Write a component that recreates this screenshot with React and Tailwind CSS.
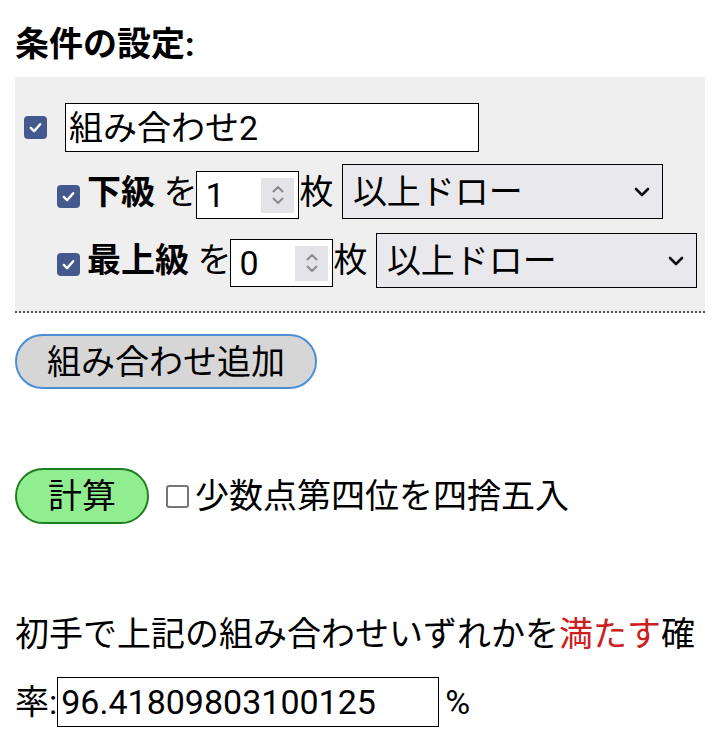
import React from "react";

function Checked({ className = "" }) {
  return (
    <div className={"w-[23px] h-[23px] rounded-[4px] bg-[#44598e] flex items-center justify-center shrink-0 " + className}>
      <svg width="15" height="15" viewBox="0 0 16 16" fill="none">
        <path d="M3 8.5 L6.5 12 L13 4.5" stroke="white" strokeWidth="2.6" strokeLinecap="round" strokeLinejoin="round" />
      </svg>
    </div>
  );
}

function NumberBox({ value }) {
  return (
    <div className="w-[103px] h-[48px] border-[1.5px] border-black bg-white flex items-center justify-between pl-[8px] pr-[4px] shrink-0">
      <span className="leading-none">{value}</span>
      <div className="w-[33px] h-[35px] bg-[#e4e4e8] flex items-center justify-center">
        <svg width="14" height="24" viewBox="0 0 14 24" fill="none">
          <path d="M2.5 8.5 L7 4 L11.5 8.5" stroke="#8a8a8e" strokeWidth="2" strokeLinecap="round" strokeLinejoin="round" />
          <path d="M2.5 15.5 L7 20 L11.5 15.5" stroke="#8a8a8e" strokeWidth="2" strokeLinecap="round" strokeLinejoin="round" />
        </svg>
      </div>
    </div>
  );
}

function SelectBox() {
  return (
    <div className="w-[321px] h-[55px] border-[1.5px] border-black bg-[#e9e9ed] flex items-center justify-between pl-[10px] pr-[12px] shrink-0">
      <span className="leading-none">以上ドロー</span>
      <svg width="16" height="10" viewBox="0 0 16 10" fill="none">
        <path d="M2 2 L8 8 L14 2" stroke="#111" strokeWidth="2.6" strokeLinecap="round" strokeLinejoin="round" />
      </svg>
    </div>
  );
}

export default function App() {
  return (
    <div className="w-[720px] h-[743px] bg-white text-black text-[34px] font-['Roboto','Noto_Sans_CJK_JP',sans-serif] px-[15px] pt-[20px] overflow-hidden">
      <div className="font-bold leading-[48px]">条件の設定:</div>

      <div className="mt-[9px] bg-[#efefef] border-b-2 border-dotted border-[#555] pt-[26px] pb-[23px]">
        <div className="flex items-center h-[49px] pl-[9px]">
          <Checked />
          <div className="ml-[18px] w-[414px] h-[49px] border-[1.5px] border-black bg-white flex items-center pl-[3px]">
            <span className="leading-none">組み合わせ2</span>
          </div>
        </div>

        <div className="flex items-end h-[55px] mt-[12px] pl-[42px]">
          <Checked className="mb-[11px]" />
          <div className="ml-[7px] self-center leading-[48px] whitespace-pre">
            <span className="font-bold">下級</span> を
          </div>
          <div className="-ml-[1px]">
            <NumberBox value="1" />
          </div>
          <div className="self-center leading-[48px] whitespace-pre">枚 </div>
          <div>
            <SelectBox />
          </div>
        </div>

        <div className="flex items-end h-[56px] mt-[13px] pl-[42px]">
          <Checked className="mb-[12px]" />
          <div className="ml-[7px] self-center leading-[48px] whitespace-pre">
            <span className="font-bold">最上級</span> を
          </div>
          <div className="mb-[1px] -ml-[1px]">
            <NumberBox value="0" />
          </div>
          <div className="self-center leading-[48px] whitespace-pre">枚 </div>
          <div>
            <SelectBox />
          </div>
        </div>
      </div>

      <div className="mt-[21px] flex">
        <div className="h-[55px] px-[30px] rounded-full border-[2.5px] border-[#4a8fd6] bg-[#d6d6d6] flex items-center">
          <span className="leading-none">組み合わせ追加</span>
        </div>
      </div>

      <div className="mt-[79px] flex items-center">
        <div className="h-[56px] px-[31px] rounded-full border-[2.5px] border-[#1f7f1f] bg-[#90ee90] flex items-center">
          <span className="leading-none">計算</span>
        </div>
        <div className="ml-[17px] w-[23px] h-[23px] rounded-[3px] border-2 border-[#767676] bg-white shrink-0"></div>
        <span className="ml-[6px] leading-[48px]">少数点第四位を四捨五入</span>
      </div>

      <div className="mt-[86px] leading-[48px] whitespace-nowrap">
        初手で上記の組み合わせいずれかを<span className="text-[#cc2020]">満たす</span>確
      </div>

      <div className="mt-[19px] flex items-center h-[50px]">
        <span className="leading-[48px]">率:</span>
        <div className="w-[382px] h-[50px] border-[1.5px] border-black bg-white flex items-center pl-[3px]">
          <span className="leading-none">96.41809803100125</span>
        </div>
        <span className="ml-[6px] leading-[48px]">%</span>
      </div>
    </div>
  );
}
